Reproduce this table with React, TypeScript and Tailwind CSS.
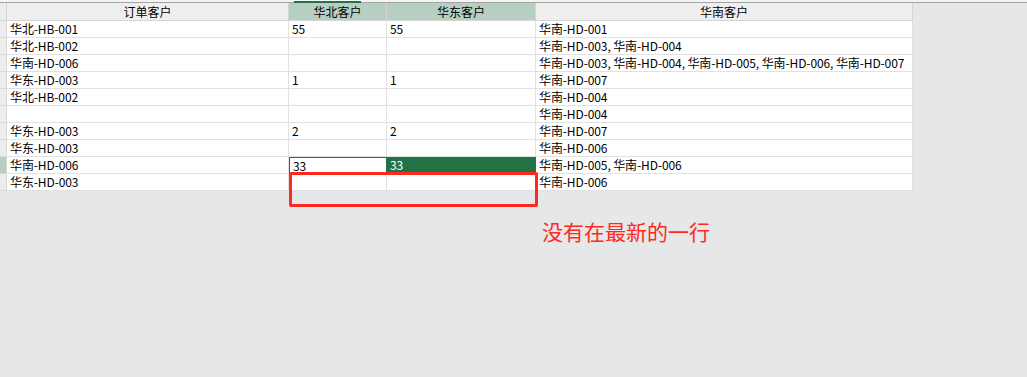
const rows: [string, string, string, string][] = [
  ["华北-HB-001", "55", "55", "华南-HD-001"],
  ["华北-HB-002", "", "", "华南-HD-003, 华南-HD-004"],
  ["华南-HD-006", "", "", "华南-HD-003, 华南-HD-004, 华南-HD-005, 华南-HD-006, 华南-HD-007"],
  ["华东-HD-003", "1", "1", "华南-HD-007"],
  ["华北-HB-002", "", "", "华南-HD-004"],
  ["", "", "", "华南-HD-004"],
  ["华东-HD-003", "2", "2", "华南-HD-007"],
  ["华东-HD-003", "", "", "华南-HD-006"],
  ["华南-HD-006", "33", "33", "华南-HD-005, 华南-HD-006"],
  ["华东-HD-003", "", "", "华南-HD-006"],
];

const ACTIVE_ROW = 8;

const cell = "h-[17px] border-b border-r pl-[3px] leading-[16px] whitespace-nowrap tracking-[-0.1px]";

export default function App() {
  return (
    <div
      className="relative h-[377px] w-[1027px] overflow-hidden bg-[#e6e7e9] text-[12px] text-black"
      style={{ fontFamily: '"Noto Sans CJK SC", "Liberation Sans", sans-serif' }}
    >
      <div className="h-[2px] bg-[#f4f4f4]" />
      <div className="h-px bg-[#a3a3a3]" />

      {/* selected column marker above the headers */}
      <div className="absolute left-[294px] top-0 h-[3px] w-[67px] border-b-2 border-[#217346] bg-white" />

      <div className="grid w-[913px] grid-cols-[7px_282px_98px_149px_377px]">
        {/* header row */}
        <div className="h-[18px] border-b border-r border-[#d4d4d4] bg-[#ececec]" />
        <div className="h-[18px] border-b border-r border-[#d4d4d4] bg-[#efefef] text-center leading-[17px]">订单客户</div>
        <div className="h-[18px] border-b border-r border-[#d4d4d4] bg-[#b6cfc0] text-center leading-[17px]">华北客户</div>
        <div className="h-[18px] border-b border-r border-[#d4d4d4] bg-[#b6cfc0] text-center leading-[17px]">华东客户</div>
        <div className="h-[18px] border-b border-r border-[#d4d4d4] bg-[#efefef] text-center leading-[17px]">华南客户</div>

        {rows.map((r, i) => {
          const active = i === ACTIVE_ROW;
          return [
            <div
              key={`h${i}`}
              className={`h-[17px] border-b border-r border-[#d9d9d9] ${active ? "bg-[#b6cfc0]" : "bg-[#ececec]"}`}
            />,
            <div key={`a${i}`} className={`${cell} border-[#e1e1e1] bg-white`}>{r[0]}</div>,
            <div
              key={`b${i}`}
              className={`${cell} bg-white ${active ? "border-t border-l border-[#217346] pl-[2px] leading-[15px]" : "border-[#e1e1e1]"}`}
            >
              {r[1]}
            </div>,
            <div
              key={`c${i}`}
              className={`${cell} ${active ? "border-[#217346] bg-[#217346] text-white" : "border-[#e1e1e1] bg-white"}`}
            >
              {r[2]}
            </div>,
            <div key={`d${i}`} className={`${cell} border-[#e1e1e1] bg-white`}>{r[3]}</div>,
          ];
        })}
      </div>

      {/* annotation box around the empty cells */}
      <div className="absolute left-[289px] top-[172px] h-[35px] w-[249px] rounded-[2px] border-[3px] border-[#ff2a1f]" />

      <div className="ml-[542px] mt-[30px] text-[21px] leading-[21px] text-[#ff2a1f]">没有在最新的一行</div>
    </div>
  );
}
